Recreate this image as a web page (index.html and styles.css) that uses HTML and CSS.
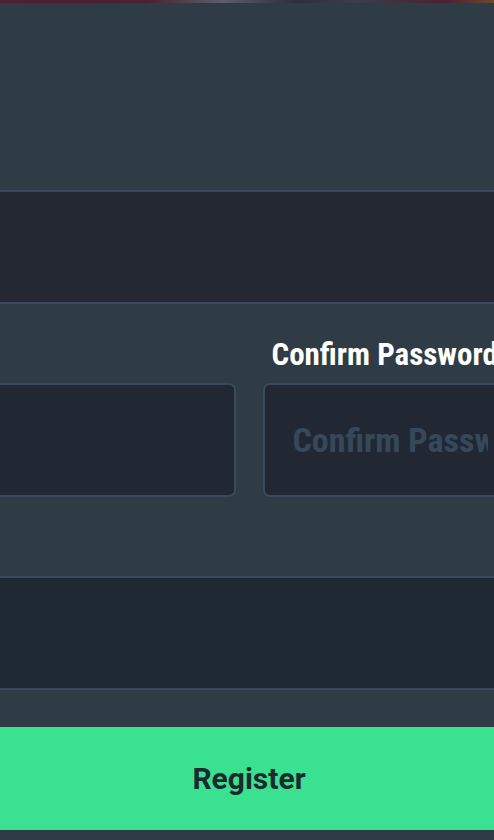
FILE: index.html
```html
<!DOCTYPE html>
<html lang="en">
<head>
  <meta charset="UTF-8">
  <meta name="viewport" content="width=device-width, initial-scale=1.0">
  <title>Register</title>
  <link rel="stylesheet" href="styles.css">
</head>
<body>
  <div class="banner"></div>

  <form class="register-form" id="registerForm">
    <div class="form-group">
      <input type="email" class="field field-top" name="email" aria-label="Email">
    </div>

    <div class="form-row">
      <div class="form-group">
        <label class="field-label" for="password">&nbsp;</label>
        <input type="password" class="field" id="password" name="password">
      </div>
      <div class="form-group">
        <label class="field-label" for="confirmPassword">Confirm Password</label>
        <input type="password" class="field" id="confirmPassword" name="confirmPassword" placeholder="Confirm Password">
      </div>
    </div>

    <div class="form-group">
      <input type="text" class="field field-alt" name="referral" aria-label="Referral">
    </div>

    <button type="submit" class="btn-register">Register</button>
  </form>
</body>
</html>
```

FILE: styles.css
```css
html, body {
  margin: 0;
  padding: 0;
  background-color: #2f3b45;
  overflow: hidden;
}
body {
  font-family: Roboto, "Noto Sans", sans-serif;
  height: 840px;
}
.banner {
  height: 3px;
  background: linear-gradient(90deg, #4b1f30 0%, #4a2233 30%, #5a5f6b 45%, #2a2f3a 60%, #3a3f4a 72%, #4a2035 90%, #6a4a2a 100%);
}
.register-form {
  margin: 187px -24px 0 -20px;
}
.form-group {
  display: flex;
  flex-direction: column;
  min-width: 0;
}
.form-row {
  display: grid;
  grid-template-columns: minmax(0, 1fr) minmax(0, 1fr);
  column-gap: 27px;
  margin-top: 31px;
}
.field-label {
  font-weight: bold;
  font-size: 31px;
  font-stretch: semi-condensed;
  color: #ffffff;
  height: 48px;
  line-height: 40px;
  padding-left: 9px;
  white-space: nowrap;
}
.field {
  box-sizing: border-box;
  width: 100%;
  min-width: 0;
  height: 114px;
  margin: 0;
  padding: 0 28px;
  border: 2px solid #3a4a5b;
  border-radius: 7px;
  background-color: #212833;
  color: #ffffff;
  font-family: Roboto, "Noto Sans", sans-serif;
  font-weight: bold;
  font-size: 34px;
  font-stretch: semi-condensed;
  outline: none;
}
.field::placeholder {
  color: #36485a;
}
.field-top {
  border-radius: 0;
  background-color: #232833;
}
.field-alt {
  border-radius: 0;
  background-color: #1f2933;
}
.form-row + .form-group {
  margin-top: 79px;
}
.btn-register {
  display: block;
  width: 100%;
  height: 103px;
  margin-top: 37px;
  border: none;
  background-color: #3ae190;
  color: #1c2a30;
  font-family: Roboto, "Noto Sans", sans-serif;
  font-weight: bold;
  font-size: 30px;
  cursor: pointer;
}
```
